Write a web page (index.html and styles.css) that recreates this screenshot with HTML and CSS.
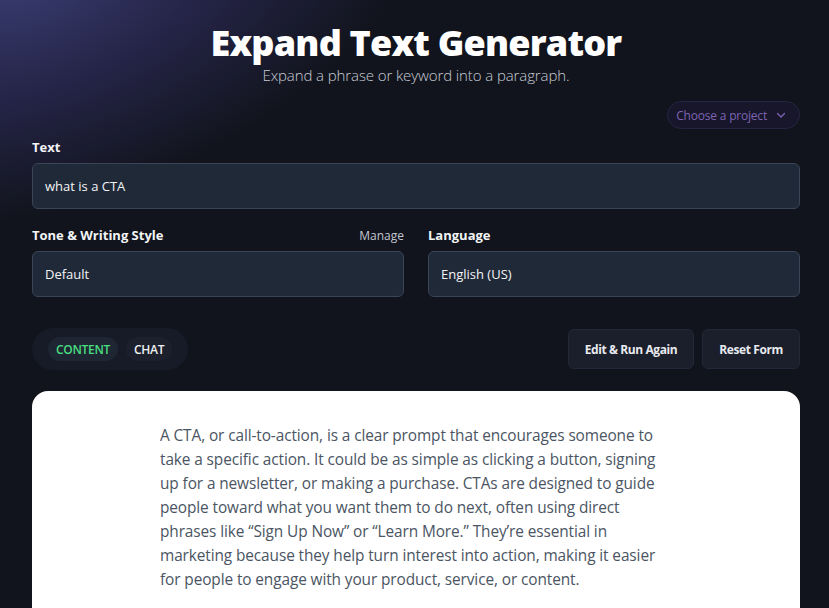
FILE: index.html
```html
<!DOCTYPE html>
<html lang="en">
<head>
<meta charset="utf-8">
<title>Expand Text Generator</title>
<link rel="stylesheet" href="styles.css">
</head>
<body>
<div class="glow"></div>
<main class="page">
  <header class="hero">
    <h1 class="title">Expand Text Generator</h1>
    <p class="subtitle">Expand a phrase or keyword into a paragraph.</p>
  </header>

  <div class="project-row">
    <button class="project-btn">Choose a project
      <svg class="chev" width="12" height="12" viewBox="0 0 12 12" fill="none"><path d="M2.5 4.5L6 8l3.5-3.5" stroke="currentColor" stroke-width="1.3" stroke-linecap="round" stroke-linejoin="round"/></svg>
    </button>
  </div>

  <section class="field">
    <div class="label-row"><label class="label">Text</label></div>
    <div class="input">what is a CTA</div>
  </section>

  <div class="two-col">
    <section class="field">
      <div class="label-row"><label class="label">Tone &amp; Writing Style</label><span class="manage">Manage</span></div>
      <div class="input">Default</div>
    </section>
    <section class="field">
      <div class="label-row"><label class="label">Language</label></div>
      <div class="input">English (US)</div>
    </section>
  </div>

  <div class="toolbar">
    <div class="tabs">
      <button class="tab active">CONTENT</button>
      <button class="tab">CHAT</button>
    </div>
    <div class="actions">
      <button class="action">Edit &amp; Run Again</button>
      <button class="action">Reset Form</button>
    </div>
  </div>

  <article class="result">
    <p class="result-text">A CTA, or call-to-action, is a clear prompt that encourages someone to take a specific action. It could be as simple as clicking a button, signing up for a newsletter, or making a purchase. CTAs are designed to guide people toward what you want them to do next, often using direct phrases like “Sign Up Now” or “Learn More.” They’re essential in marketing because they help turn interest into action, making it easier for people to engage with your product, service, or content.</p>
  </article>
</main>
</body>
</html>
```

FILE: styles.css
```css
* { box-sizing: border-box; }
html, body { margin: 0; padding: 0; }
body {
  background: #11141c;
  font-family: "Open Sans", "Noto Sans", sans-serif;
  color: #e5e7eb;
  height: 608px;
  overflow: hidden;
  position: relative;
}
.glow {
  position: absolute;
  left: -260px;
  top: -230px;
  width: 720px;
  height: 420px;
  background: radial-gradient(ellipse at 40% 45%, rgba(62, 66, 124, 0.85) 0%, rgba(52, 48, 104, 0.55) 35%, rgba(17, 20, 28, 0) 70%);
  transform: rotate(-18deg);
  pointer-events: none;
}
.page {
  position: relative;
  width: 768px;
  margin-left: 32px;
  padding-top: 23px;
}
.hero { text-align: center; }
.title {
  margin: 0;
  font-family: "Open Sans", sans-serif;
  font-weight: 800;
  font-size: 36px;
  line-height: 40px;
  color: #ffffff;
  letter-spacing: -0.8px;
}
.subtitle {
  margin: 3px 0 0;
  font-size: 15px;
  line-height: 18px;
  color: #c8ccd6;
  font-weight: 300;
  letter-spacing: -0.1px;
}
.project-row {
  display: flex;
  justify-content: flex-end;
  margin-top: 17px;
}
.project-btn {
  display: flex;
  align-items: center;
  gap: 8px;
  height: 28px;
  padding: 0 12px 0 8px;
  border-radius: 14px;
  background: #17162a;
  border: 1px solid #262442;
  color: #7e64b3;
  font-family: inherit;
  font-size: 12px;
  letter-spacing: -0.2px;
}
.chev { color: #7e64b3; }
.field { margin-top: 9px; }
.label-row {
  display: flex;
  justify-content: space-between;
  align-items: baseline;
  height: 16px;
  margin-bottom: 9px;
}
.label {
  font-size: 13px;
  font-weight: 700;
  color: #f3f4f6;
}
.manage { font-size: 12px; color: #c3c7cf; }
.input {
  height: 46px;
  display: flex;
  align-items: center;
  padding: 0 12px;
  background: #202938;
  border: 1px solid #3b4558;
  border-radius: 6px;
  font-size: 13px;
  color: #f3f4f6;
}
.two-col {
  display: grid;
  grid-template-columns: 1fr 1fr;
  gap: 24px;
  margin-top: 8px;
}
.toolbar {
  display: flex;
  justify-content: space-between;
  align-items: center;
  margin-top: 31px;
}
.tabs {
  display: flex;
  gap: 8px;
  padding: 9px 16px;
  background: #171b27;
  border-radius: 21px;
}
.tab {
  height: 24px;
  padding: 0 8px;
  border-radius: 12px;
  border: 0;
  background: #1c202c;
  color: #eef0f3;
  font-family: inherit;
  font-size: 12px;
  font-weight: 600;
  letter-spacing: -0.3px;
}
.tab.active { background: #1e2633; color: #4ade80; }
.actions { display: flex; gap: 8px; }
.action {
  height: 40px;
  padding: 0 16px;
  background: #1b1e2b;
  border: 1px solid #232838;
  border-radius: 6px;
  color: #e8eaee;
  font-family: inherit;
  font-size: 12px;
  font-weight: 700;
  letter-spacing: -0.4px;
}
.result {
  margin-top: 21px;
  background: #ffffff;
  border-radius: 16px;
  padding: 33px 128px 40px;
  min-height: 260px;
}
.result-text {
  margin: 0;
  font-size: 15.4px;
  line-height: 24px;
  letter-spacing: -0.1px;
  color: #4b5563;
}
```
